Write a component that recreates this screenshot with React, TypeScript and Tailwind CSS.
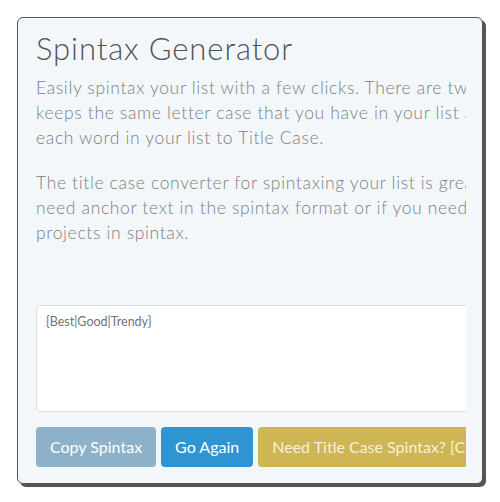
import React from "react";

const font = { fontFamily: "Lato, 'Open Sans', sans-serif" };

export default function App() {
    return (
        <div className="w-[500px] h-[502px] bg-white pt-[17px] pl-[17px]" style={font}>
            <div className="w-[466px] h-[467px] bg-[#f4f7f9] border border-[#555] rounded-md shadow-[3px_3px_0_#555] pl-[18px] pr-[16px] pt-[12px]">
                <div className="overflow-hidden">
                    <div className="w-[640px]">
                        <h1 className="text-[31px] leading-[36px] font-light tracking-[0.9px] text-[#4d5358]">Spintax Generator</h1>

                        <p className="mt-[9px] text-[17.5px] leading-[25px] font-light tracking-[0.65px] text-[#7a7f84] whitespace-nowrap">
                            Easily spintax your list with a few clicks. There are two options: one that
                            <br />
                            keeps the same letter case that you have in your list and one that converts
                            <br />
                            each word in your list to Title Case.
                        </p>

                        <p className="mt-[20px] text-[17.5px] leading-[25px] font-light tracking-[0.65px] text-[#7a7f84] whitespace-nowrap">
                            The title case converter for spintaxing your list is great if you
                            <br />
                            need anchor text in the spintax format or if you need to submit
                            <br />
                            projects in spintax.
                        </p>

                        <textarea
                            readOnly
                            value="{Best|Good|Trendy}"
                            className="block mt-[60px] w-[640px] h-[107px] bg-white border border-[#dcdfe2] rounded px-[9px] py-[7px] text-[12.5px] text-[#6f7478] resize-none outline-none"
                        />

                        <div className="flex gap-[5px] mt-[15px]">
                            <button className="h-[40px] px-[14px] rounded bg-[#8db1c9] text-white text-[16px]">Copy Spintax</button>
                            <button className="h-[40px] px-[14px] rounded bg-[#2e95d2] text-white text-[16px]">Go Again</button>
                            <button className="h-[40px] px-[14px] rounded bg-[#cdb653] text-[#f7f1dc] text-[16px] whitespace-nowrap">Need Title Case Spintax? [Click Here]</button>
                        </div>
                    </div>
                </div>
            </div>
        </div>
    );
}
